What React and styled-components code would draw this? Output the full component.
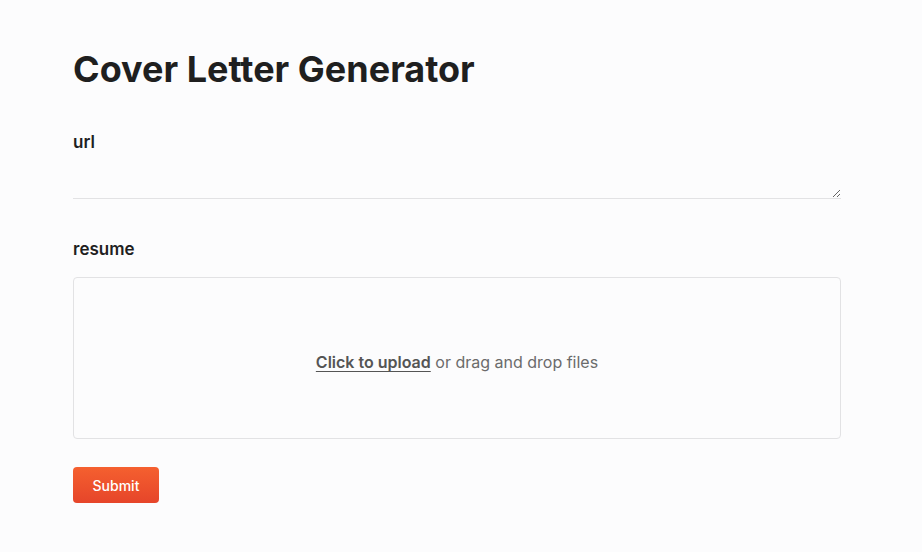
import React from 'react';
import styled, { createGlobalStyle } from 'styled-components';

const GlobalStyle = createGlobalStyle`
  html, body {
    margin: 0;
    padding: 0;
    background: #fcfcfd;
    font-family: Inter, "Noto Sans", sans-serif;
    color: #1f1f1f;
  }
`;

const Page = styled.div`
  padding: 45px 0 40px 73px;
  width: 768px;
`;

const Title = styled.h1`
  font-size: 36px;
  font-weight: 700;
  margin: 0 0 37px;
  line-height: 48px;
`;

const Field = styled.div`
  display: flex;
  flex-direction: column;
  margin-bottom: ${(p) => p.gap || 0}px;
`;

const Label = styled.label`
  font-size: 17px;
  font-weight: 600;
  line-height: 24px;
  margin-bottom: ${(p) => p.space}px;
`;

const TextArea = styled.textarea`
  box-sizing: border-box;
  width: 100%;
  height: 34px;
  border: none;
  border-bottom: 1px solid #e2e2e4;
  background: transparent;
  font-family: inherit;
  font-size: 16px;
  padding: 6px 0;
  outline: none;
  resize: vertical;
`;

const DropZone = styled.div`
  box-sizing: border-box;
  height: 162px;
  padding-top: 8px;
  border: 1px solid #e2e2e4;
  border-radius: 4px;
  display: flex;
  align-items: center;
  justify-content: center;
  font-size: 16px;
  color: #6b6b6b;
  white-space: pre;
`;

const UploadLink = styled.span`
  font-weight: 600;
  color: #555;
  text-decoration: underline;
  text-underline-offset: 3px;
  cursor: pointer;
`;

const SubmitButton = styled.button`
  width: 86px;
  height: 36px;
  border: none;
  border-radius: 4px;
  background: linear-gradient(#f5602f, #e6452a);
  color: #fff;
  font-family: inherit;
  font-size: 14px;
  font-weight: 500;
  cursor: pointer;
`;

export default function App() {
  return (
    <>
      <GlobalStyle />
      <Page>
        <Title>Cover Letter Generator</Title>
        <Field gap={38}>
          <Label space={11}>url</Label>
          <TextArea />
        </Field>
        <Field gap={28}>
          <Label space={16}>resume</Label>
          <DropZone>
            <UploadLink>Click to upload</UploadLink>{' or drag and drop files'}
          </DropZone>
        </Field>
        <SubmitButton>Submit</SubmitButton>
      </Page>
    </>
  );
}
